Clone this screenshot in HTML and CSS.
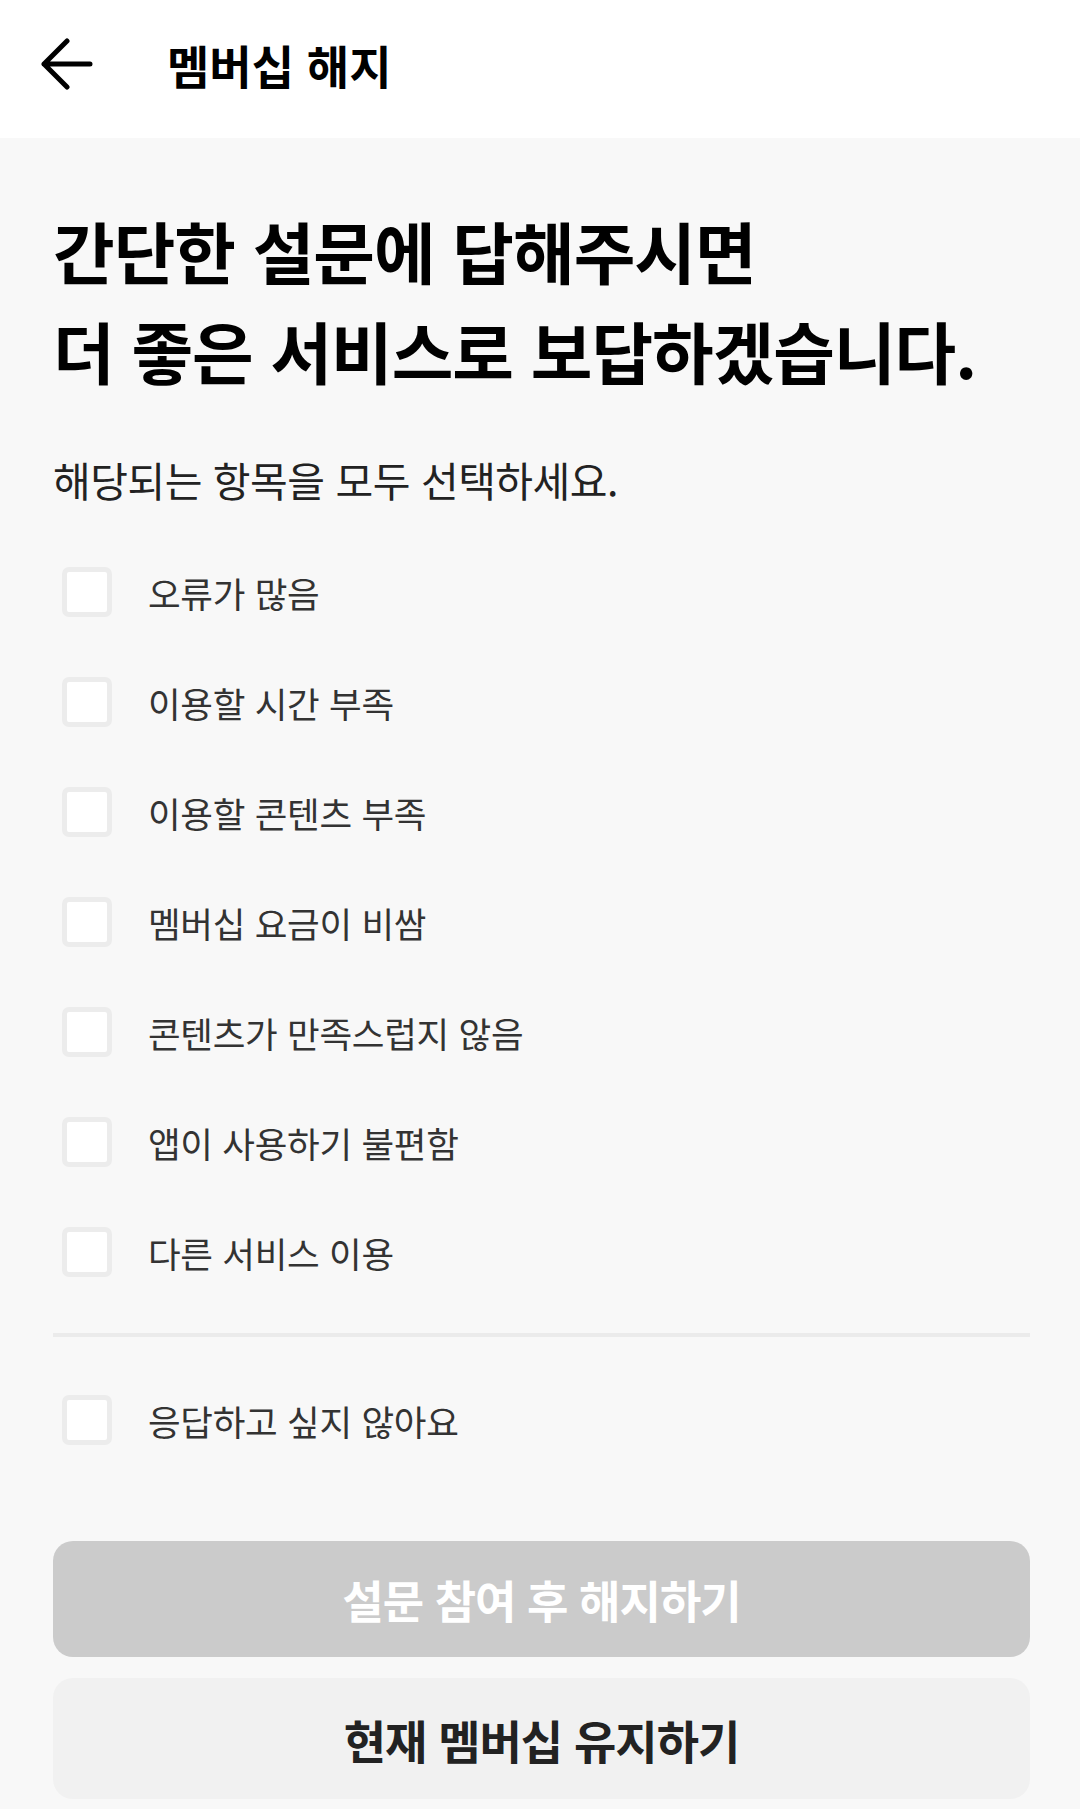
FILE: index.html
```html
<!DOCTYPE html>
<html lang="ko">
<head>
    <meta charset="UTF-8">
    <meta name="viewport" content="width=device-width, initial-scale=1.0">
    <title>멤버십 해지</title>
    <link rel="stylesheet" href="styles.css">
</head>
<body>
    <header class="topbar">
        <button class="back" type="button" aria-label="뒤로">
            <svg width="52" height="52" viewBox="0 0 52 52">
                <path d="M3 26 H49 M26 3 L3 26 L26 49" fill="none" stroke="#000" stroke-width="5" stroke-linecap="round" stroke-linejoin="round"/>
            </svg>
        </button>
        <h2 class="topbar-title">멤버십 해지</h2>
    </header>
    <main class="survey">
        <h1 class="headline">간단한 설문에 답해주시면<br>더 좋은 서비스로 보답하겠습니다.</h1>
        <p class="guide">해당되는 항목을 모두 선택하세요.</p>
        <ul class="options">
            <li class="option"><span class="box"></span>오류가 많음</li>
            <li class="option"><span class="box"></span>이용할 시간 부족</li>
            <li class="option"><span class="box"></span>이용할 콘텐츠 부족</li>
            <li class="option"><span class="box"></span>멤버십 요금이 비쌈</li>
            <li class="option"><span class="box"></span>콘텐츠가 만족스럽지 않음</li>
            <li class="option"><span class="box"></span>앱이 사용하기 불편함</li>
            <li class="option"><span class="box"></span>다른 서비스 이용</li>
        </ul>
        <hr class="divider">
        <ul class="options">
            <li class="option"><span class="box"></span>응답하고 싶지 않아요</li>
        </ul>
        <div class="actions">
            <button class="btn btn-disabled" type="button">설문 참여 후 해지하기</button>
            <button class="btn btn-keep" type="button">현재 멤버십 유지하기</button>
        </div>
    </main>
</body>
</html>
```
FILE: styles.css
```css
body{
    margin: 0;
    padding: 0;
    background-color: #f8f8f8;
    font-family: "Noto Sans CJK KR", "Noto Sans", sans-serif;
    color: #222;
}
.topbar{
    height: 138px;
    background-color: white;
    display: flex;
    align-items: center;
    box-sizing: border-box;
    padding-left: 41px;
}
.back{
    border: none;
    background: none;
    padding: 0;
    width: 52px;
    height: 52px;
    margin-top: -10px;
    cursor: pointer;
}
.back svg{
    display: block;
}
.topbar-title{
    margin: -10px 0 0 74px;
    font-size: 46px;
    font-weight: 700;
    letter-spacing: 0;
    color: #000;
}
.survey{
    padding: 0 50px 0 53px;
}
.headline{
    margin: 62px 0 0 0;
    font-size: 67px;
    line-height: 100px;
    font-weight: 700;
    letter-spacing: -1px;
    color: #000;
}
.guide{
    margin: 54px 0 0 0;
    font-size: 41px;
    line-height: 50px;
    letter-spacing: -0.5px;
    color: #222;
}
.options{
    list-style: none;
    margin: 0;
    padding: 0;
}
.guide + .options{
    margin-top: 33px;
}
.option{
    height: 110px;
    display: flex;
    align-items: center;
    font-size: 35.5px;
    letter-spacing: -0.3px;
    color: #333;
}
.box{
    width: 50px;
    height: 50px;
    box-sizing: border-box;
    border: 5px solid #ececec;
    border-radius: 7px;
    background-color: white;
    margin: 0 36px 0 9px;
    flex-shrink: 0;
}
.divider{
    margin: 26px 0 28px 0;
    border: none;
    height: 4px;
    background-color: #ebebeb;
}
.actions{
    margin-top: 66px;
    display: flex;
    flex-direction: column;
    gap: 21px;
}
.btn{
    border: none;
    border-radius: 20px;
    font-family: inherit;
    font-weight: 700;
    letter-spacing: -1px;
    cursor: pointer;
}
.btn-disabled{
    height: 116px;
    font-size: 45px;
    background-color: #cbcbcb;
    color: white;
}
.btn-keep{
    height: 121px;
    font-size: 46px;
    background-color: #f1f1f1;
    color: #222;
}
```
